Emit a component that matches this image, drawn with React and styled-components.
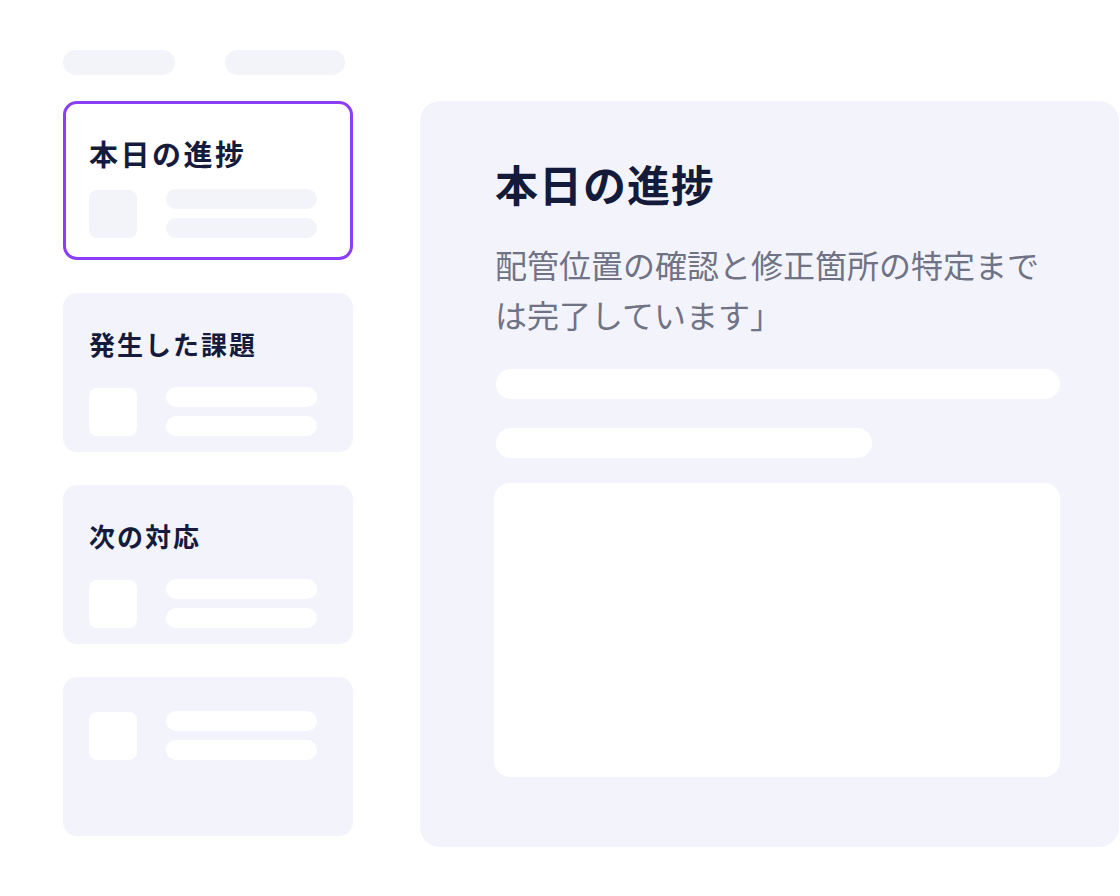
import React from 'react';
import styled, { createGlobalStyle } from 'styled-components';

const GlobalStyle = createGlobalStyle`
  body {
    margin: 0;
    background: #fff;
    font-family: "Noto Sans CJK JP", "Noto Sans", sans-serif;
  }
`;

const Page = styled.div`
  display: flex;
  align-items: flex-start;
  gap: 67px;
  padding: 50px 0 0 63px;
  box-sizing: border-box;
  width: 1120px;
  height: 896px;
  overflow: hidden;
`;

const Sidebar = styled.div`
  display: flex;
  flex-direction: column;
  width: 290px;
  flex: 0 0 290px;
`;

const TabRow = styled.div`
  display: flex;
  gap: 50px;
  margin-bottom: 26px;
`;

const TabPill = styled.div`
  width: ${p => p.$w}px;
  height: 25px;
  border-radius: 13px;
  background: #f3f4fa;
`;

const CardList = styled.div`
  display: flex;
  flex-direction: column;
  gap: 33px;
`;

const Card = styled.div`
  box-sizing: border-box;
  height: 159px;
  border-radius: 14px;
  padding: ${p => (p.$active ? '31px 23px' : '34px 26px')};
  background: ${p => (p.$active ? '#fff' : '#f3f4fb')};
  border: ${p => (p.$active ? '3px solid #8b3df8' : 'none')};
`;

const CardTitle = styled.div`
  font-size: ${p => (p.$active ? '29px' : '26px')};
  line-height: ${p => (p.$active ? '36px' : '34px')};
  font-weight: 700;
  color: #161b3d;
  letter-spacing: ${p => (p.$active ? '2.5px' : '2px')};
  margin-bottom: ${p => (p.$active ? '18px' : '26px')};
`;

const SkeletonRow = styled.div`
  display: flex;
  align-items: center;
  gap: 29px;
`;

const Thumb = styled.div`
  width: 48px;
  height: 48px;
  border-radius: 8px;
  background: ${p => (p.$onWhite ? '#f3f4fa' : '#fff')};
`;

const Lines = styled.div`
  display: flex;
  flex-direction: column;
  gap: 9px;
`;

const Line = styled.div`
  width: 151px;
  height: 20px;
  border-radius: 10px;
  background: ${p => (p.$onWhite ? '#f3f4fa' : '#fff')};
`;

const Panel = styled.div`
  box-sizing: border-box;
  margin-top: 51px;
  width: 699px;
  flex: 0 0 699px;
  height: 746px;
  border-radius: 20px;
  background: #f3f4fb;
  padding: 52px 0 0 75px;
`;

const Heading = styled.h1`
  margin: 0;
  font-size: 43px;
  line-height: 60px;
  font-weight: 700;
  letter-spacing: 1px;
  color: #141a3a;
`;

const Body = styled.p`
  margin: 26px 0 0;
  width: 566px;
  font-size: 32px;
  line-height: 50px;
  font-weight: 400;
  color: #6f7385;
`;

const Bar = styled.div`
  width: ${p => p.$w}px;
  height: 30px;
  border-radius: 15px;
  background: #fff;
  margin-top: ${p => p.$mt}px;
  margin-left: 1px;
`;

const Preview = styled.div`
  width: 566px;
  height: 294px;
  border-radius: 16px;
  background: #fff;
  margin-top: 25px;
  margin-left: -1px;
`;

function Skeleton({ onWhite }) {
  return (
    <SkeletonRow>
      <Thumb $onWhite={onWhite} />
      <Lines>
        <Line $onWhite={onWhite} />
        <Line $onWhite={onWhite} />
      </Lines>
    </SkeletonRow>
  );
}

const cards = [
  { title: '本日の進捗', active: true },
  { title: '発生した課題' },
  { title: '次の対応' },
  { title: null },
];

export default function App() {
  return (
    <>
      <GlobalStyle />
      <Page>
        <Sidebar>
          <TabRow>
            <TabPill $w={112} />
            <TabPill $w={120} />
          </TabRow>
          <CardList>
            {cards.map((c, i) => (
              <Card key={i} $active={c.active}>
                {c.title && <CardTitle $active={c.active}>{c.title}</CardTitle>}
                <Skeleton onWhite={c.active} />
              </Card>
            ))}
          </CardList>
        </Sidebar>
        <Panel>
          <Heading>本日の進捗</Heading>
          <Body>配管位置の確認と修正箇所の特定までは完了しています」</Body>
          <Bar $w={564} $mt={30} />
          <Bar $w={376} $mt={29} />
          <Preview />
        </Panel>
      </Page>
    </>
  );
}
